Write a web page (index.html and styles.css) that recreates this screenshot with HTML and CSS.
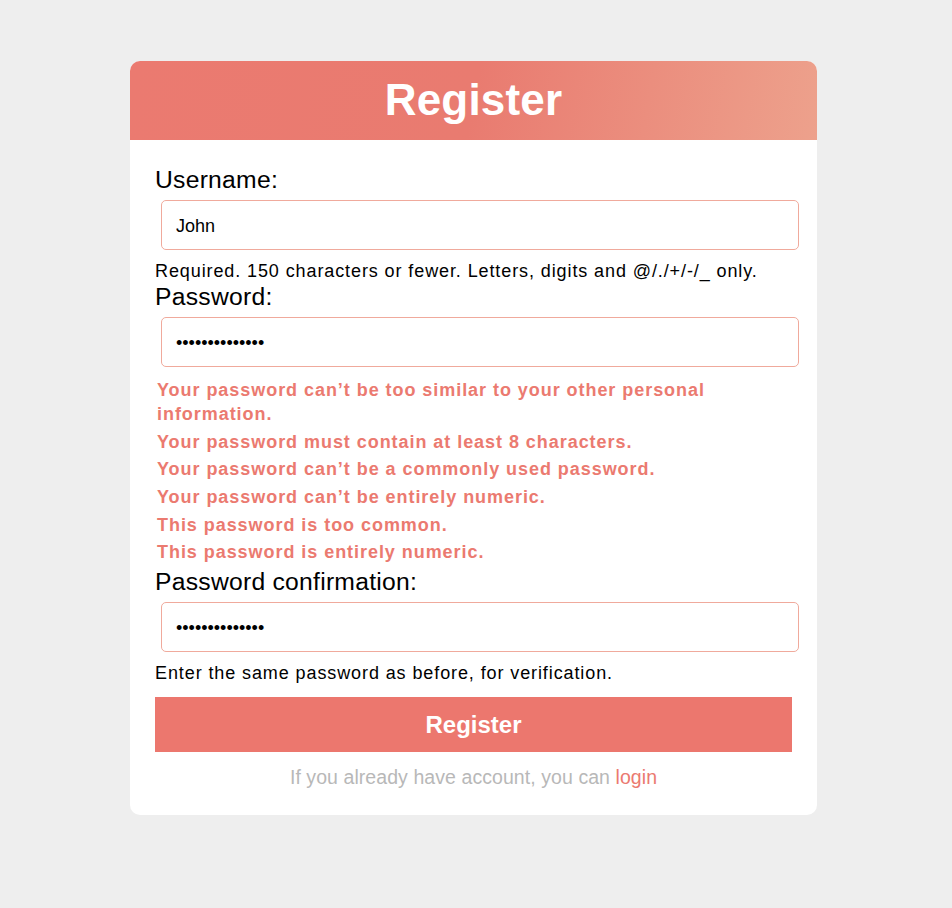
FILE: index.html
```html
<!DOCTYPE html>
<html lang="en">
<head>
<meta charset="utf-8">
<title>Register</title>
<link rel="stylesheet" href="styles.css">
</head>
<body>
<div class="card">
  <div class="card-header"><h1 class="title">Register</h1></div>
  <form class="card-body">
    <label class="label" for="u">Username:</label>
    <input class="field" id="u" type="text" value="John">
    <div class="help">Required. 150 characters or fewer. Letters, digits and @/./+/-/_ only.</div>
    <label class="label" for="p1">Password:</label>
    <input class="field" id="p1" type="password" value="12345678901234">
    <ul class="errors">
      <li>Your password can’t be too similar to your other personal information.</li>
      <li>Your password must contain at least 8 characters.</li>
      <li>Your password can’t be a commonly used password.</li>
      <li>Your password can’t be entirely numeric.</li>
      <li>This password is too common.</li>
      <li>This password is entirely numeric.</li>
    </ul>
    <label class="label" for="p2">Password confirmation:</label>
    <input class="field" id="p2" type="password" value="12345678901234">
    <div class="help help-last">Enter the same password as before, for verification.</div>
    <button class="submit" type="button">Register</button>
    <p class="footer">If you already have account, you can <a class="link" href="#">login</a></p>
  </form>
</div>
</body>
</html>
```
FILE: styles.css
```css
html, body {
  margin: 0;
  padding: 0;
}
body {
  background: #eeeeee;
  font-family: "Liberation Sans", Arial, sans-serif;
  color: #000;
  padding-top: 61px;
  min-height: 908px;
  box-sizing: border-box;
}
.card {
  width: 687px;
  margin-left: 130px;
  background: #fff;
  border-radius: 10px;
  overflow: hidden;
}
.card-header {
  height: 79px;
  display: flex;
  align-items: center;
  justify-content: center;
  background: linear-gradient(100deg, #eb7a70 0%, #e97b70 50%, #eda18c 100%);
}
.title {
  margin: 0;
  color: #fff;
  font-size: 44px;
  font-weight: bold;
  line-height: 1;
  padding-bottom: 2px;
  letter-spacing: 0.2px;
}
.card-body {
  padding: 26px 25px 27px;
  display: flex;
  flex-direction: column;
  align-items: flex-start;
}
.label {
  font-size: 24.7px;
  line-height: 27.6px;
  letter-spacing: 0.25px;
  display: block;
}
.field {
  box-sizing: border-box;
  width: 638px;
  height: 50px;
  margin: 6.4px 0 0 6px;
  padding: 3px 14px 0;
  border: 1px solid #f0aa9c;
  border-radius: 5px;
  font-family: "Liberation Sans", Arial, sans-serif;
  font-size: 18px;
  color: #000;
  background: #fff;
  outline: none;
}
.help {
  margin-top: 11px;
  margin-bottom: 1px;
  font-size: 18px;
  line-height: 21px;
  letter-spacing: 0.9px;
}
.help-last {
  margin-top: 11px;
  margin-bottom: 0;
}
.errors {
  list-style: none;
  margin: 11px 0 4px;
  padding: 0 0 0 2px;
  box-sizing: border-box;
  width: 637px;
  color: #eb7a70;
  font-size: 18px;
  font-weight: bold;
  line-height: 24px;
  letter-spacing: 0.95px;
}
.errors li {
  margin-bottom: 3.7px;
}
.errors li:last-child {
  margin-bottom: 0;
}
.submit {
  align-self: stretch;
  margin-top: 13px;
  height: 55px;
  border: none;
  background: #ec776e;
  color: #fff;
  font-family: "Liberation Sans", Arial, sans-serif;
  font-size: 24px;
  font-weight: bold;
  cursor: pointer;
}
.footer {
  align-self: stretch;
  margin: 14px 0 0;
  text-align: center;
  color: #b8b8b8;
  font-size: 19.5px;
  line-height: 22px;
  letter-spacing: 0.07px;
}
.link {
  color: #eb7a70;
  text-decoration: none;
}
```
